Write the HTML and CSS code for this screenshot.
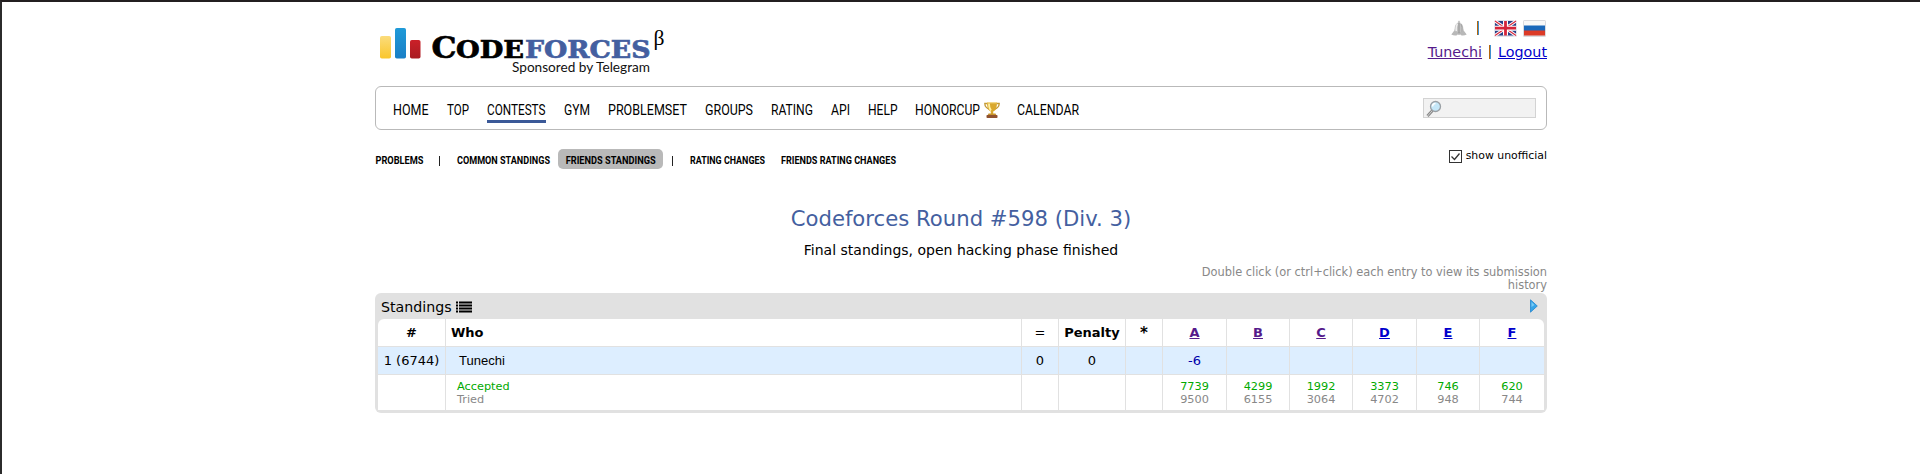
FILE: index.html
```
<!DOCTYPE html>
<html lang="en">
<head>
<meta charset="utf-8">
<title>Codeforces Round #598 (Div. 3) - Standings</title>
<link rel="stylesheet" href="styles.css">
</head>
<body>
<div class="page">
  <header class="header">
    <svg class="logo" width="300" height="60" viewBox="375 20 300 60">
      <defs>
        <linearGradient id="gy" x2="0" y2="1"><stop offset="0" stop-color="#fbdc7c"/><stop offset="1" stop-color="#fac62c"/></linearGradient>
        <linearGradient id="gb" x2="0" y2="1"><stop offset="0" stop-color="#1f9ad8"/><stop offset="1" stop-color="#1a7fc6"/></linearGradient>
        <linearGradient id="gr" x2="0" y2="1"><stop offset="0" stop-color="#cb2028"/><stop offset="1" stop-color="#a91c22"/></linearGradient>
      </defs>
      <rect x="380" y="36" width="11" height="22.5" rx="1.8" fill="url(#gy)"/>
      <rect x="395" y="28" width="11" height="30.5" rx="1.8" fill="url(#gb)"/>
      <rect x="410" y="40" width="10.5" height="18.5" rx="1.8" fill="url(#gr)"/>
      <g class="wordmark">
        <text x="431.5" y="58.3" font-size="29.500" textLength="25" lengthAdjust="spacingAndGlyphs">C</text>
        <text x="456" y="58.3" font-size="24.500" textLength="68" lengthAdjust="spacingAndGlyphs">ODE</text>
        <text class="forces" x="525" y="58.3" font-size="24.500" textLength="125.500" lengthAdjust="spacingAndGlyphs">FORCES</text>
      </g>
      <text class="beta" x="653.500" y="45" textLength="11" lengthAdjust="spacingAndGlyphs">β</text>
      <text class="sponsor" x="512" y="72" textLength="138" lengthAdjust="spacingAndGlyphs">Sponsored by Telegram</text>
    </svg>
    <div class="account">
      <div class="langs">
        <svg class="bell" width="16" height="16" viewBox="0 0 16 16"><path d="M6.800 2Q8-1 9.200 2V3Q12.300 4 12.300 8.500L13.500 13H2.500L3.700 8.500Q3.700 4 6.800 3Z" fill="#c2c2c2"/><path d="M6.500 4Q4.800 6 5.300 11" stroke="#eee" stroke-width="1.500" fill="none"/><path d="M10 4Q11.500 7 11 12" stroke="#a5a5a5" fill="none"/><path d="M3 11L.3 14.500Q3 16 6 15.300L8 13l2 2.300q3 .7 5.700-.8L13 11l-3 1H6Z" fill="#b8b8b8"/><path d="M8 3v12" stroke="#909090"/></svg>
        <i class="bar"></i>
        <svg class="uk" width="23" height="17" viewBox="0 0 23 17"><rect width="23" height="17" rx="1.500" fill="#e4e4ea"/><rect x="1" y="1" width="21" height="14.500" fill="#283f86"/><path d="M1 1l21 14.500M22 1L1 15.500" stroke="#fff" stroke-width="3.200"/><path d="M1 1l21 14.500M22 1L1 15.500" stroke="#d8283c" stroke-width="1.200"/><path d="M11.500 1v14.500M1 8.200h21" stroke="#fff" stroke-width="5"/><path d="M11.500 1v14.500M1 8.200h21" stroke="#d5253a" stroke-width="2.800"/></svg>
        <svg class="ru" width="23" height="17" viewBox="0 0 23 17"><rect width="23" height="17" rx="1.500" fill="#dadade"/><rect x="1" y="1" width="21" height="5" fill="#f8f8f8"/><rect x="1" y="5.500" width="21" height="5.500" fill="#1a68ba"/><rect x="1" y="10.500" width="21" height="5" fill="#dc3a26"/></svg>
      </div>
      <div class="user"><a class="visited" href="#">Tunechi</a><i class="bar"></i><a href="#">Logout</a></div>
    </div>
  </header>

  <nav class="menu">
    <svg width="36" height="22"><text y="17" textLength="35.500" lengthAdjust="spacingAndGlyphs">HOME</text></svg>
    <svg width="22" height="22"><text y="17" textLength="22" lengthAdjust="spacingAndGlyphs">TOP</text></svg>
    <svg class="current" width="59" height="22"><text y="17" textLength="58.500" lengthAdjust="spacingAndGlyphs">CONTESTS</text></svg>
    <svg width="26" height="22"><text y="17" textLength="26" lengthAdjust="spacingAndGlyphs">GYM</text></svg>
    <svg width="79" height="22"><text y="17" textLength="79" lengthAdjust="spacingAndGlyphs">PROBLEMSET</text></svg>
    <svg width="48" height="22"><text y="17" textLength="48" lengthAdjust="spacingAndGlyphs">GROUPS</text></svg>
    <svg width="42" height="22"><text y="17" textLength="42" lengthAdjust="spacingAndGlyphs">RATING</text></svg>
    <svg width="19" height="22"><text y="17" textLength="19" lengthAdjust="spacingAndGlyphs">API</text></svg>
    <svg width="29" height="22"><text y="17" textLength="29.500" lengthAdjust="spacingAndGlyphs">HELP</text></svg>
    <svg width="84" height="22"><text y="17" textLength="65" lengthAdjust="spacingAndGlyphs">HONORCUP</text>
      <g transform="translate(69 4)"><path d="M4 1.500H.8q0 4 4.700 6M12 1.500h3.200q0 4-4.700 6" fill="none" stroke="#c49a35" stroke-width="1.300"/><path d="M3 .5h10q0 7.500-3.800 9v2.500H6.800V9.500Q3 8 3 .5Z" fill="#d9a82e"/><path d="M5 1.500q0 5 2 7" stroke="#fff0a0" stroke-width="1.800" fill="none"/><path d="M3 .8h10" stroke="#f5da86"/><path d="M4.500 11.500h7l1 2h-9Z" fill="#c8942a"/><rect x="2.500" y="13" width="11" height="3" rx=".8" fill="#90522e"/></g></svg>
    <svg width="62" height="22"><text y="17" textLength="62" lengthAdjust="spacingAndGlyphs">CALENDAR</text></svg>
    <div class="search"><svg width="16" height="17" viewBox="0 0 16 17"><path d="M6.500 10.500L1.500 16" stroke="#888" stroke-width="2.800"/><path d="M6 11l-4.500 5" stroke="#d0d0d0"/><circle cx="9.500" cy="6.500" r="5" fill="#c5e7f8" stroke="#9a9fa4" stroke-width="1.300"/><path d="M6.500 6.500q0-3 3-3" stroke="#fff" stroke-width="1.500" fill="none"/></svg></div>
  </nav>

  <div class="second">
    <div class="submenu">
      <svg width="48" height="20"><text x=".5" y="15" textLength="48" lengthAdjust="spacingAndGlyphs">PROBLEMS</text></svg>
      <i class="sep first"></i>
      <svg width="93" height="20"><text y="15" textLength="93" lengthAdjust="spacingAndGlyphs">COMMON STANDINGS</text></svg>
      <span class="pill"><svg width="90" height="20"><text x=".7" y="15" textLength="90" lengthAdjust="spacingAndGlyphs">FRIENDS STANDINGS</text></svg></span>
      <i class="sep"></i>
      <svg width="75" height="20"><text y="15" textLength="75" lengthAdjust="spacingAndGlyphs">RATING CHANGES</text></svg>
      <svg class="last" width="115" height="20"><text y="15" textLength="115" lengthAdjust="spacingAndGlyphs">FRIENDS RATING CHANGES</text></svg>
    </div>
    <label class="unofficial"><svg width="13" height="13" viewBox="0 0 13 13"><rect x=".5" y=".5" width="12" height="12" fill="#fff" stroke="#333"/><path d="M2.500 6.500l3 3 5-6" fill="none" stroke="#333" stroke-width="1.300"/></svg><span>show unofficial</span></label>
  </div>

  <h1 class="title">Codeforces Round #598 (Div. 3)</h1>
  <p class="status">Final standings, open hacking phase finished</p>
  <p class="hint">Double click (or ctrl+click) each entry to view its submission<br>history</p>

  <section class="datatable">
    <div class="caption">
      <span>Standings</span>
      <svg width="16" height="12" viewBox="0 0 16 12"><path d="M0 1.500h2M0 4.500h2M0 7.500h2M0 10.500h2M3 1.500h13M3 4.500h13M3 7.500h13M3 10.500h13" stroke="#000" stroke-width="2"/></svg>
      <svg class="next" width="8" height="14" viewBox="0 0 8 14"><path d="M.5.8L7.300 7 .5 13.200Z" fill="#36a5e8" stroke="#2585ce" stroke-width=".8"/><path d="M1.500 3v5l3-2" fill="#79cbf5"/></svg>
    </div>
    <div class="grid">
      <div class="row head"><b>#</b><b class="who">Who</b><span>=</span><b>Penalty</b><b class="star">*</b><a class="visited" href="#">A</a><a class="visited" href="#">B</a><a class="visited" href="#">C</a><a href="#">D</a><a href="#">E</a><a href="#">F</a></div>
      <div class="row mine"><span class="rank">1 (6744)</span><span class="who name">Tunechi</span><span>0</span><span>0</span><span></span><span class="tries">-6</span><span></span><span></span><span></span><span></span><span></span></div>
      <div class="row stats"><div></div><div class="who"><em>Accepted</em>Tried</div><div></div><div></div><div></div><div><em>7739</em>9500</div><div><em>4299</em>6155</div><div><em>1992</em>3064</div><div><em>3373</em>4702</div><div><em>746</em>948</div><div><em>620</em>744</div></div>
    </div>
  </section>
</div>
</body>
</html>
```
FILE: styles.css
```
* { box-sizing: border-box; }
body {
  margin: 0;
  height: 474px;
  overflow: hidden;
  background: #fff;
  border-top: 2px solid #231f20;
  border-left: 2px solid #2b2b2b;
  font-family: "DejaVu Sans", Verdana, sans-serif;
  color: #000;
}
svg { display: block; flex: none; overflow: visible; }
a { color: #0000cc; text-decoration: underline; }
a.visited { color: #551a8b; }
.page { width: 1172px; margin-left: 373px; }

.header { display: flex; justify-content: space-between; height: 84px; padding-top: 18px; }
.wordmark { font-family: "DejaVu Serif", serif; font-weight: bold; fill: #000; stroke: #000; stroke-width: .7px; }
.wordmark .forces { fill: #445fa0; stroke: #445fa0; }
.beta { font-family: "Liberation Serif", serif; font-size: 22px; }
.sponsor { font-family: Lato, sans-serif; font-size: 14px; fill: #111; }
.account { display: flex; flex-direction: column; align-items: flex-end; }
.langs { display: flex; height: 17px; align-items: flex-start; }
.langs .bar { margin: 1px 15px 0 10px; }
.uk { margin-right: 6px; }
.ru { margin-right: 1px; }
.bar { display: block; width: 2px; height: 14px; background: linear-gradient(90deg, #b5670c 50%, #3f8fd0 50%); }
.user { display: flex; margin-top: 6px; align-items: center; font-size: 14.300px; line-height: 18px; }
.user .bar { margin: 0 7px; }

.menu {
  display: flex;
  align-items: flex-start;
  gap: 18px;
  height: 44px;
  padding: 11px 10px 0 17px;
  border: 1px solid #b9b9b9;
  border-radius: 6px;
  font: 15.500px Roboto, sans-serif;
}
.current { height: 25px; border-bottom: 3px solid #3b5998; }
.search { margin-left: auto; width: 113px; height: 20px; border: 1px solid #d3d3d3; background: #f2f2f2; padding: 1px 2px; }

.second { display: flex; justify-content: space-between; padding-top: 19px; height: 63px; }
.submenu { display: flex; height: 20px; font: bold 11px Roboto, sans-serif; }
.sep { width: 1px; height: 10px; margin: 7px 17px 0 9px; background: #222; }
.sep.first { margin: 7px 17px 0 16px; }
.pill { margin-left: 8px; padding: 0 8px 0 7px; background: #b9b9b9; border-radius: 5px; }
.last { margin-left: 16px; }
.unofficial { display: flex; gap: 4px; padding-top: 1px; font-size: 10.900px; line-height: 12px; }

.title { margin: 13px 0 0; font-weight: normal; font-size: 21.200px; line-height: 26px; text-align: center; color: #445fa0; }
.status { margin: 9px 0 0; font-size: 14px; line-height: 18px; text-align: center; }
.hint { margin: 7px 0 0; font-size: 11.400px; line-height: 13px; color: #888; text-align: right; }

.datatable { margin-top: 1px; height: 120px; background: #e1e1e1; border-radius: 6px; padding: 0 3px 3px; }
.caption { display: flex; align-items: center; gap: 4px; height: 26px; padding: 2px 6px 0 3px; font-size: 14.200px; }
.caption .next { margin-left: auto; margin-bottom: 3px; }
.grid { display: grid; grid-template-rows: 27px 27px 35px; row-gap: 1px; border-radius: 6px 6px 0 0; overflow: hidden; }
.row { display: grid; grid-template-columns: 67px 575px 36px 66px 36px 63px 62px 62px 63px 62px 64px; column-gap: 1px; text-align: center; font-size: 13px; line-height: 28px; }
.row > * { background: #fff; white-space: nowrap; overflow: hidden; }
.head a { font-weight: bold; }
.head .star { font-size: 15px; }
.row .who { text-align: left; padding-left: 5px; }
.mine > * { background: #ddeeff; }
.mine .name { font-family: "Liberation Sans", sans-serif; padding-left: 13px; }
.mine .tries { color: #0000aa; }
.stats { font-size: 11.300px; line-height: 13px; color: #888; }
.stats > * { padding-top: 5px; }
.row.stats .who { padding-left: 11px; }
.row.mine .who { padding-left: 13px; }
.stats em { display: block; font-style: normal; color: #00a900; }
```
